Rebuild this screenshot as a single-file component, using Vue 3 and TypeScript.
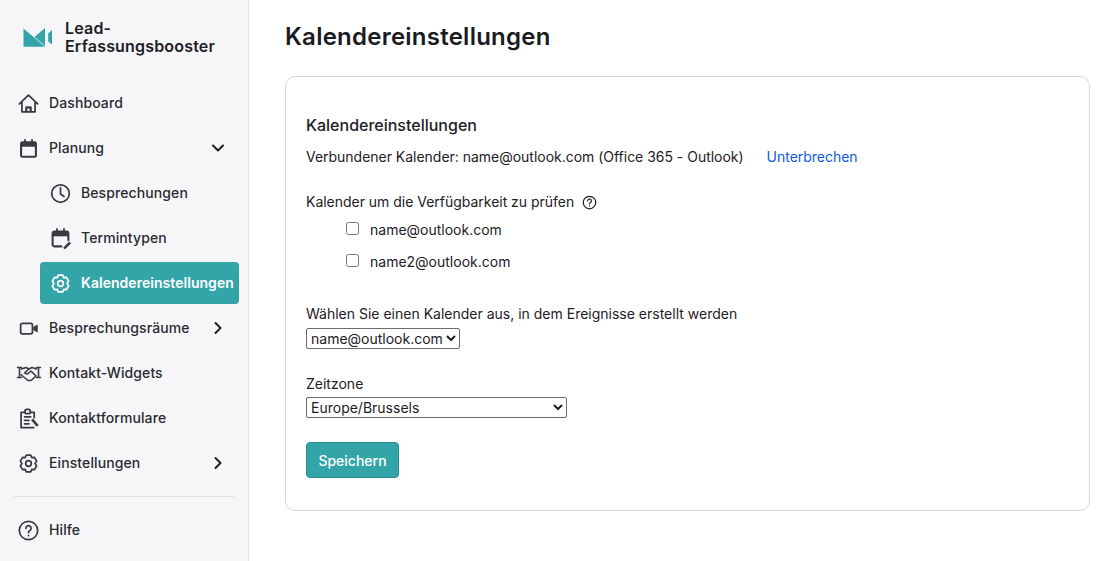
<script setup lang="ts">
const calendars = ['name@outlook.com', 'name2@outlook.com']
</script>

<template>
  <div class="page">
    <aside class="sidebar">
      <div class="brand">
        <svg class="logo" width="30" height="20" viewBox="0 0 30 20">
          <path d="M0.500 0.500 22 18.700H0.500Z" fill="#33a5a8" />
          <path d="M22 0 11.500 9 22 18Z" fill="#33a5a8" />
          <path d="M25.200 5.500 29 2V16.500L25.200 13.500Z" fill="#33a5a8" />
        </svg>
        <div class="brand-name">Lead-<br />Erfassungsbooster</div>
      </div>

      <nav class="nav">
        <a class="item">
          <svg class="ic" viewBox="0 0 24 24"><path d="M1.500 12.500 12 2.500l10.500 10M4.500 10.500V21.500h15V10.500" /><path d="M9.500 21v-4.500h5V21" stroke-width="2.500" /></svg>
          <span>Dashboard</span>
        </a>
        <a class="item">
          <svg class="ic" viewBox="0 0 24 24"><rect x="3.500" y="5" width="17" height="16.500" rx="1.500" stroke-width="2.400" /><path d="M3.500 7.500h17" stroke-width="5" stroke-linecap="butt" /><path d="M8 2v3M16 2v3" /></svg>
          <span>Planung</span>
          <svg class="chev" viewBox="0 0 14 14"><path d="M2 4.500 7 9.500l5-5" /></svg>
        </a>
        <a class="item sub">
          <svg class="ic" viewBox="0 0 24 24"><circle cx="12" cy="12" r="10" /><path d="M12 5.500v7l4 3" /></svg>
          <span>Besprechungen</span>
        </a>
        <a class="item sub">
          <svg class="ic" viewBox="0 0 24 24"><path d="M13 21H5a2 2 0 0 1-2-2V6a2 2 0 0 1 2-2h14a2 2 0 0 1 2 2v8" stroke-width="2.400" /><path d="M3 7h18" stroke-width="5" stroke-linecap="butt" /><path d="M8 1v3M16 1v3" /><path d="M16 23.500l7-7" stroke-width="3" stroke-linecap="butt" /></svg>
          <span>Termintypen</span>
        </a>
        <a class="item sub active">
          <svg class="ic" viewBox="0 0 24 24"><path d="M9.500 2.500h5l1.300 2.800 3-.3 2.500 4.300-1.800 2.700 1.800 2.700-2.500 4.300-3-.3-1.300 2.800h-5l-1.300-2.800-3 .3-2.500-4.300L4.500 12 2.700 9.300 5.200 5l3 .3Z" /><circle cx="12" cy="12" r="3.200" /></svg>
          <span>Kalendereinstellungen</span>
        </a>
        <a class="item">
          <svg class="ic" viewBox="0 0 24 24" stroke-width="2.400"><rect x="3" y="6" width="13.500" height="12" rx="2" /><path d="M18 10.500 22 8v8l-4-2.500Z" fill="#3a3b40" stroke-width="1" /></svg>
          <span>Besprechungsräume</span>
          <svg class="chev" viewBox="0 0 14 14"><path d="M4.500 2 9.500 7l-5 5" /></svg>
        </a>
        <a class="item">
          <svg class="ic wide" viewBox="0 0 26 24"><path d="M1.500 6.500h4M3.500 6.500v10M1.500 16.500h4M24.500 6.500h-4M22.500 6.500v10M24.500 16.500h-4" /><path d="M5.500 8 10 6.500l3 1.500-4.500 4 3 1 3.500-3 5 5-5 4.500h-3l-6-5-1-1M13 8l3-1.500 4.500 1.500" /></svg>
          <span>Kontakt-Widgets</span>
        </a>
        <a class="item">
          <svg class="ic" viewBox="0 0 24 24" stroke-width="1.700"><path d="M7 5H3.500v17.500H18M15 5h3.500v6" /><rect x="8" y="1.500" width="6" height="5" rx="2" /><path d="M7.500 10h7M7.500 14h5M7.500 18h5" /><path d="M16 13l6.500 7.500" stroke-width="3" stroke-linecap="butt" /></svg>
          <span>Kontaktformulare</span>
        </a>
        <a class="item">
          <svg class="ic" viewBox="0 0 24 24"><path d="M9.500 2.500h5l1.300 2.800 3-.3 2.500 4.300-1.800 2.700 1.800 2.700-2.500 4.300-3-.3-1.300 2.800h-5l-1.300-2.800-3 .3-2.500-4.300L4.500 12 2.700 9.300 5.200 5l3 .3Z" /><circle cx="12" cy="12" r="3.200" /></svg>
          <span>Einstellungen</span>
          <svg class="chev" viewBox="0 0 14 14"><path d="M4.500 2 9.500 7l-5 5" /></svg>
        </a>
      </nav>

      <hr class="divider" />

      <a class="item help">
        <svg class="ic" viewBox="0 0 24 24"><circle cx="12" cy="12" r="10.500" /><path d="M9 9.500a3 3 0 1 1 4.500 2.600c-1 .6-1.500 1.200-1.500 2.400" /><circle cx="12" cy="17.800" r="1" fill="#3a3b40" stroke="none" /></svg>
        <span>Hilfe</span>
      </a>
    </aside>

    <main class="main">
      <h1 class="title">Kalendereinstellungen</h1>
      <section class="card">
        <h2 class="card-title">Kalendereinstellungen</h2>
        <p class="connected">
          <span>Verbundener Kalender: name@outlook.com (Office 365 - Outlook)</span>
          <a class="link">Unterbrechen</a>
        </p>

        <div class="avail-label">
          <span>Kalender um die Verfügbarkeit zu prüfen</span>
          <svg class="q" viewBox="0 0 24 24"><circle cx="12" cy="12" r="10" /><path d="M9 9.500a3 3 0 1 1 4.500 2.600c-1 .6-1.500 1.200-1.500 2.400" /><circle cx="12" cy="17.500" r="1" fill="#1f2024" stroke="none" /></svg>
        </div>
        <label v-for="c in calendars" :key="c" class="check">
          <input type="checkbox" />
          <span>{{ c }}</span>
        </label>

        <label class="field first">
          <span>Wählen Sie einen Kalender aus, in dem Ereignisse erstellt werden</span>
          <select class="sel mail"><option>name@outlook.com</option><option>name2@outlook.com</option></select>
        </label>

        <label class="field second">
          <span>Zeitzone</span>
          <select class="sel tz"><option>Europe/Brussels</option></select>
        </label>

        <button class="save" type="button">Speichern</button>
      </section>
    </main>
  </div>
</template>

<style>
html, body { margin: 0; background: #fff; }
</style>

<style scoped>
.page {
  display: flex;
  height: 561px;
  overflow: hidden;
  font-family: Inter, "Liberation Sans", sans-serif;
  font-size: 14px;
  color: #1f2024;
}
.sidebar {
  width: 248px;
  flex: none;
  background: #f6f6f9;
  border-right: 1px solid #e3e4e8;
}
.brand {
  display: flex;
  align-items: center;
  height: 38px;
  padding: 18px 0 0 23px;
  gap: 12px;
}
.logo { flex: none; margin-top: 1px; }
.brand-name {
  font-size: 16px;
  font-weight: 600;
  line-height: 18px;
  letter-spacing: 0.18px;
  color: #1f2024;
}
.nav {
  display: flex;
  flex-direction: column;
  gap: 3px;
  margin-top: 26px;
}
.item {
  display: flex;
  align-items: center;
  height: 42px;
  margin-left: 18px;
  margin-right: 9px;
  font-weight: 500;
  letter-spacing: 0.1px;
  color: #2a2b30;
  border-radius: 4px;
  white-space: nowrap;
}
.item span { padding-bottom: 2px; }
.ic {
  width: 21px;
  height: 21px;
  margin-right: 10px;
  flex: none;
  fill: none;
  stroke: #3a3b40;
  stroke-width: 2;
  stroke-linejoin: round;
  stroke-linecap: round;
}
.ic.wide {
  width: 26px;
  height: 24px;
  margin-left: -2px;
  margin-right: 7px;
  stroke-width: 1.6;
}
.chev {
  width: 14px;
  height: 14px;
  margin-left: auto;
  margin-right: 14px;
  fill: none;
  stroke: #1f2024;
  stroke-width: 2;
  stroke-linecap: round;
  stroke-linejoin: round;
}
.sub {
  margin-left: 40px;
  margin-right: 9px;
  padding-left: 10px;
}
.active {
  background: #33a5a8;
  color: #fff;
  font-weight: 600;
  letter-spacing: 0.04px;
}
.active .ic { stroke: #fff; }
.divider {
  border: 0;
  border-top: 1px solid #dfe0e4;
  margin: 12px 14px 12px;
}
.help { margin-top: 12px; }
.main {
  flex: 1;
  min-width: 0;
  padding: 0 19px 0 36px;
}
.title {
  margin: 21px 0 0;
  font-size: 24px;
  font-weight: 600;
  line-height: 32px;
  letter-spacing: 0.24px;
  color: #1a1b1f;
}
.card {
  margin-top: 23px;
  height: 435px;
  box-sizing: border-box;
  padding: 39px 20px 0;
  border: 1px solid #d5d9dc;
  border-radius: 10px;
  background: #fff;
}
.card-title {
  margin: 0;
  font-size: 16px;
  font-weight: 500;
  line-height: 18px;
}
.connected {
  margin: 13px 0 0;
  line-height: 20px;
  display: flex;
  gap: 24px;
  letter-spacing: -0.02px;
}
.link { color: #0f5be0; margin-left: -1px; }
.avail-label {
  margin-top: 25px;
  display: flex;
  align-items: center;
  line-height: 20px;
  letter-spacing: -0.02px;
}
.q {
  width: 15px;
  height: 15px;
  margin-left: 8px;
  fill: none;
  stroke: #1f2024;
  stroke-width: 2;
  stroke-linecap: round;
}
.check {
  display: flex;
  align-items: center;
  height: 32px;
  margin-left: 40px;
}
.check:first-of-type { margin-top: 1px; }
.check input {
  margin: 0 11px 1px 0;
  width: 13px;
  height: 13px;
}
.field {
  display: flex;
  flex-direction: column;
  align-items: flex-start;
  line-height: 20px;
}
.field.first { margin-top: 27px; }
.field.second { margin-top: 25px; }
.sel {
  margin-top: 4px;
  height: 21px;
  font-family: inherit;
  font-size: 14px;
  color: #1f2024;
  background: #fff;
  border: 1px solid #6b6b6b;
  border-radius: 2px;
}
.mail { width: 154px; }
.tz { width: 261px; margin-top: 3px; }
.save {
  display: block;
  margin-top: 24px;
  width: 93px;
  height: 36px;
  font-family: inherit;
  font-size: 14px;
  font-weight: 500;
  color: #fff;
  background: #33a5a8;
  border: 1px solid #2b8f92;
  border-radius: 4px;
  padding: 0;
}
</style>
